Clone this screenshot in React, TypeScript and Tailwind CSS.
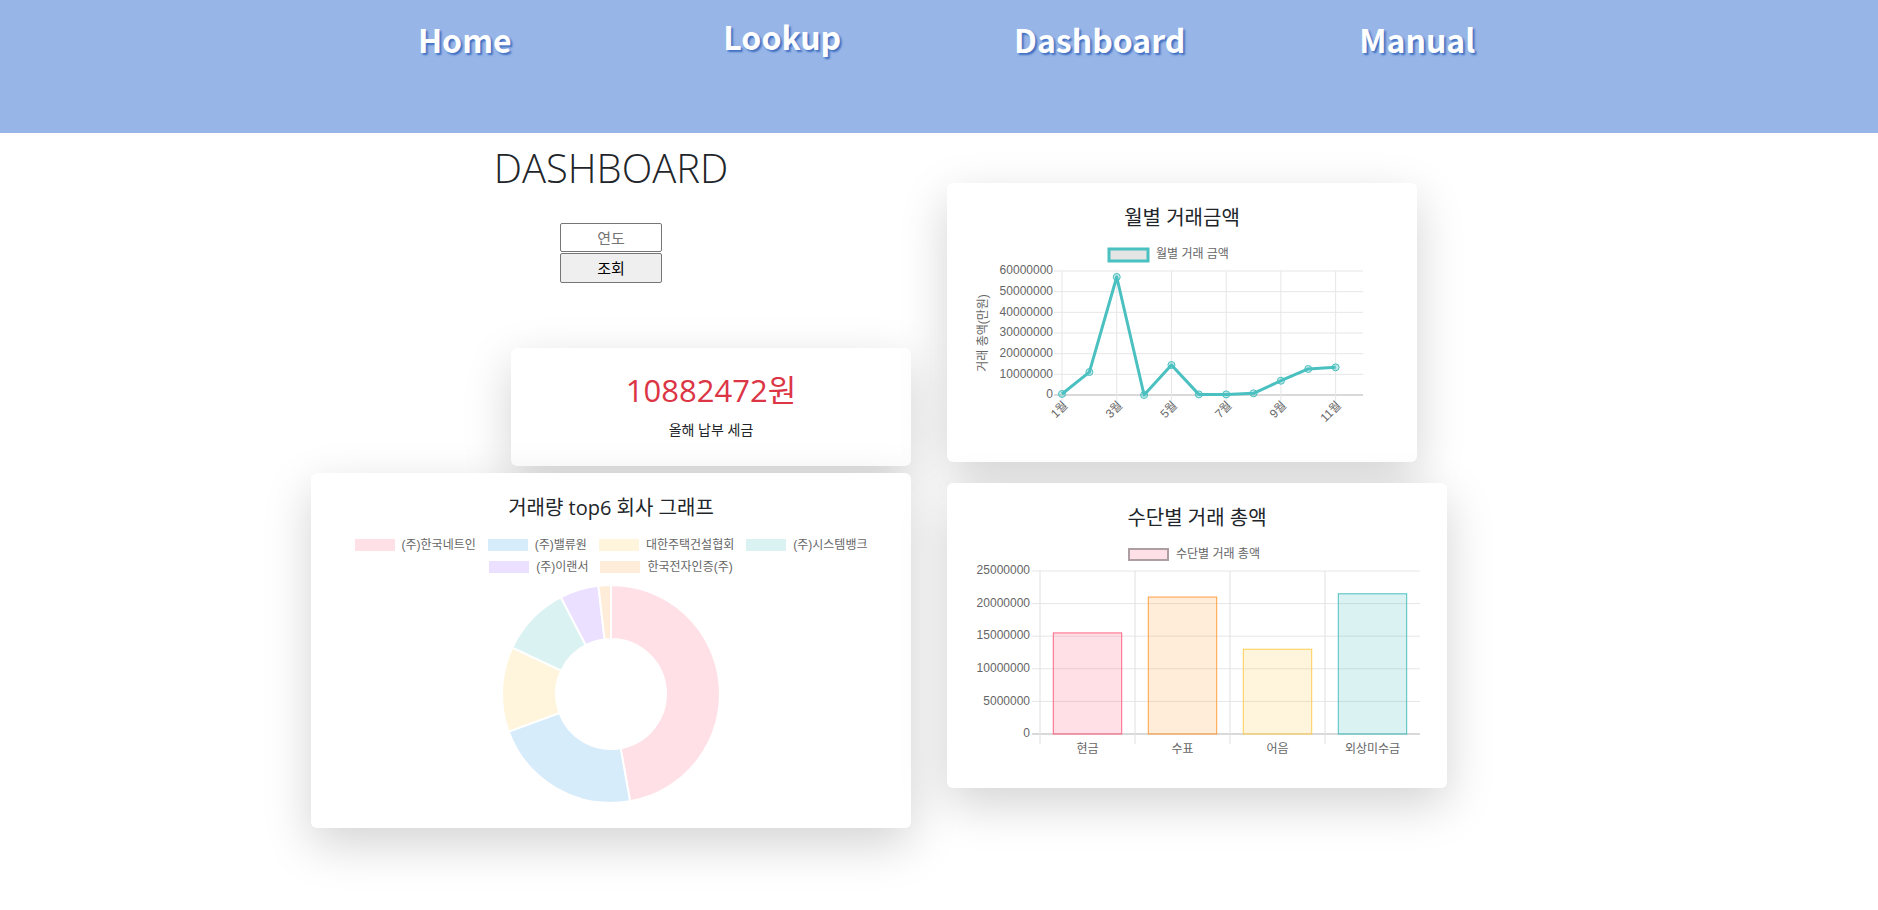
import React from "react";

const chartFont = { fontFamily: '"Liberation Sans", "Noto Sans CJK KR", sans-serif' };

const navItems = [
  { label: "Home", up: false },
  { label: "Lookup", up: true },
  { label: "Dashboard", up: false },
  { label: "Manual", up: false },
];

// 월별 거래 금액 (백만원 단위로 환산)
const monthly = [0.5, 11.1, 57.1, 0, 14.5, 0.3, 0.3, 0.8, 6.9, 12.6, 13.4];
const months = ["1월", "2월", "3월", "4월", "5월", "6월", "7월", "8월", "9월", "10월", "11월", "12월"];

const methods = [
  { label: "현금", value: 15.5, fill: "rgba(255,99,132,0.2)", stroke: "rgb(255,99,132)" },
  { label: "수표", value: 21.0, fill: "rgba(255,159,64,0.2)", stroke: "rgb(255,159,64)" },
  { label: "어음", value: 13.0, fill: "rgba(255,205,86,0.2)", stroke: "rgb(255,205,86)" },
  { label: "외상미수금", value: 21.5, fill: "rgba(75,192,192,0.2)", stroke: "rgb(75,192,192)" },
];

const companies = [
  { name: "(주)한국네트인", share: 0.472, color: "#ffe0e6" },
  { name: "(주)밸류원", share: 0.222, color: "#d7ecfb" },
  { name: "대한주택건설협회", share: 0.126, color: "#fff5dd" },
  { name: "(주)시스템뱅크", share: 0.104, color: "#dbf2f2" },
  { name: "(주)이랜서", share: 0.0575, color: "#ebe0ff" },
  { name: "한국전자인증(주)", share: 0.0185, color: "#ffecd9" },
];

function LineChart() {
  const left = 115;
  const right = 416;
  const top = 38;
  const bottom = 162;
  const step = (right - left) / 11;
  const y = (v: number) => bottom - (v / 60) * (bottom - top);
  const pts = monthly.map((v, i) => [left + i * step, y(v)]);

  return (
    <svg width={470} height={200} className="block" style={chartFont}>
      <rect x={162} y={16} width={39} height={12} fill="#e5e5e5" stroke="#4bc0c0" strokeWidth={3} />
      <text x={209} y={22} fontSize={12} fill="#666" dominantBaseline="middle">
        월별 거래 금액
      </text>

      {[0, 1, 2, 3, 4, 5, 6].map((i) => {
        const yy = top + (i * (bottom - top)) / 6;
        return (
          <g key={i}>
            <line x1={left - 8} x2={right} y1={yy} y2={yy} stroke={i === 6 ? "#b3b3b3" : "#e6e6e6"} />
            <text x={106} y={yy} fontSize={12} fill="#666" textAnchor="end" dominantBaseline="middle">
              {(60000000 - i * 10000000).toString()}
            </text>
          </g>
        );
      })}

      {[0, 2, 4, 6, 8, 10].map((i) => (
        <g key={i}>
          <line x1={left + i * step} x2={left + i * step} y1={top} y2={bottom + 6} stroke="#e6e6e6" />
          <text
            transform={`translate(${left + i * step + 4},${bottom + 9}) rotate(-45)`}
            fontSize={12}
            fill="#666"
            textAnchor="end"
            dominantBaseline="middle"
          >
            {months[i]}
          </text>
        </g>
      ))}

      <text
        transform="translate(37,100) rotate(-90)"
        fontSize={12}
        fill="#666"
        textAnchor="middle"
        dominantBaseline="middle"
      >
        거래 총액(만원)
      </text>

      <polyline
        points={pts.map((p) => p.join(",")).join(" ")}
        fill="none"
        stroke="#4bc0c0"
        strokeWidth={3}
        strokeLinejoin="round"
      />
      {pts.map((p, i) => (
        <circle key={i} cx={p[0]} cy={p[1]} r={3.5} fill="rgba(75,192,192,0.35)" stroke="#4bc0c0" strokeWidth={1} />
      ))}
    </svg>
  );
}

function BarChart() {
  const left = 93;
  const right = 473;
  const top = 38;
  const bottom = 201;
  const cat = (right - left) / 4;
  const y = (v: number) => bottom - (v / 25) * (bottom - top);

  return (
    <svg width={500} height={240} className="block" style={chartFont}>
      <rect x={182} y={16} width={39} height={11} fill="rgba(255,99,132,0.2)" stroke="#ac9ea3" strokeWidth={2} />
      <text x={229} y={22} fontSize={12} fill="#666" dominantBaseline="middle">
        수단별 거래 총액
      </text>

      {[0, 1, 2, 3, 4, 5].map((i) => {
        const yy = top + (i * (bottom - top)) / 5;
        return (
          <g key={i}>
            <line x1={left - 8} x2={right} y1={yy} y2={yy} stroke={i === 5 ? "#b3b3b3" : "#e6e6e6"} />
            <text x={83} y={yy} fontSize={12} fill="#666" textAnchor="end" dominantBaseline="middle">
              {(25000000 - i * 5000000).toString()}
            </text>
          </g>
        );
      })}

      {[0, 1, 2, 3].map((i) => (
        <line key={i} x1={left + i * cat} x2={left + i * cat} y1={top} y2={bottom + 10} stroke="#e0e0e0" />
      ))}

      {methods.map((m, i) => {
        const w = cat * 0.72;
        const x = left + i * cat + (cat - w) / 2;
        return (
          <g key={m.label}>
            <rect x={x} y={y(m.value)} width={w} height={bottom - y(m.value)} fill={m.fill} stroke={m.stroke} strokeWidth={1} />
            <text x={left + i * cat + cat / 2} y={217} fontSize={12} fill="#666" textAnchor="middle" dominantBaseline="middle">
              {m.label}
            </text>
          </g>
        );
      })}
    </svg>
  );
}

function Donut() {
  const cx = 116;
  const cy = 116;
  const R = 109;
  const r = 55;
  const pt = (deg: number, rad: number) => {
    const a = (deg * Math.PI) / 180;
    return `${cx + rad * Math.sin(a)},${cy - rad * Math.cos(a)}`;
  };
  let start = 0;
  return (
    <svg width={232} height={232} className="block">
      {companies.map((c) => {
        const a0 = start;
        const a1 = start + c.share * 360;
        start = a1;
        const large = a1 - a0 > 180 ? 1 : 0;
        const d = `M${pt(a0, R)} A${R},${R} 0 ${large} 1 ${pt(a1, R)} L${pt(a1, r)} A${r},${r} 0 ${large} 0 ${pt(a0, r)} Z`;
        return <path key={c.name} d={d} fill={c.color} stroke="#fff" strokeWidth={2} />;
      })}
    </svg>
  );
}

export default function App() {
  return (
    <div className="min-h-screen bg-white text-[#212529]" style={{ fontFamily: '"Open Sans", "Noto Sans CJK KR", sans-serif' }}>
      {/* top nav */}
      <header className="h-[133px] bg-[#97b5e7]">
        <nav className="ml-[306px] flex w-[1270px]">
          {navItems.map((item) => (
            <a
              key={item.label}
              className={`w-1/4 text-center text-[32px] leading-none font-semibold text-white [text-shadow:2px_2px_2px_#3f6fc2] ${
                item.up ? "pt-[20px]" : "pt-[23px]"
              }`}
              style={{ fontFamily: '"Noto Sans CJK KR", sans-serif' }}
            >
              {item.label}
            </a>
          ))}
        </nav>
      </header>

      <div className="flex pl-[311px]">
        {/* left column */}
        <div className="flex w-[600px] flex-col items-center">
          <h1 className="mt-[11px] text-[40px] leading-[48px] font-light">DASHBOARD</h1>

          <input
            placeholder="연도"
            className="mt-[31px] h-[29px] w-[102px] rounded-[2px] border border-[#767676] text-center text-[15px] placeholder:text-[#757575]"
          />
          <button className="mt-[1px] h-[30px] w-[102px] rounded-[2px] border border-[#767676] bg-[#efefef] text-[15px] font-normal text-black">
            조회
          </button>

          <div className="mt-[65px] flex h-[118px] w-[400px] flex-col items-center self-end rounded-md bg-white pt-[23px] shadow-[0_16px_48px_rgba(0,0,0,0.175)]">
            <div className="text-[31px] leading-[38px] text-[#dc3545]">10882472원</div>
            <div className="mt-[10px] text-[14px] leading-[21px]">올해 납부 세금</div>
          </div>

          <div className="mt-[7px] flex h-[355px] w-[600px] flex-col items-center rounded-md bg-white pt-[20px] shadow-[0_16px_48px_rgba(0,0,0,0.175)]">
            <div className="text-[20px] leading-[30px]">거래량 top6 회사 그래프</div>
            <div className="mt-[11px] flex w-[570px] flex-wrap justify-center gap-x-[12px]" style={chartFont}>
              {companies.map((c) => (
                <div key={c.name} className="flex h-[22px] items-center text-[12px] text-[#666]">
                  <span className="mr-[7px] h-[12px] w-[40px]" style={{ backgroundColor: c.color }} />
                  {c.name}
                </div>
              ))}
            </div>
            <Donut />
          </div>
        </div>

        {/* right column */}
        <div className="ml-[36px] flex flex-col items-start pt-[50px]">
          <div className="flex h-[279px] w-[470px] flex-col items-center rounded-md bg-white pt-[20px] shadow-[0_16px_48px_rgba(0,0,0,0.175)]">
            <div className="text-[20px] leading-[30px]">월별 거래금액</div>
            <LineChart />
          </div>

          <div className="mt-[21px] flex h-[305px] w-[500px] flex-col items-center rounded-md bg-white pt-[20px] shadow-[0_16px_48px_rgba(0,0,0,0.175)]">
            <div className="text-[20px] leading-[30px]">수단별 거래 총액</div>
            <BarChart />
          </div>
        </div>
      </div>
    </div>
  );
}
